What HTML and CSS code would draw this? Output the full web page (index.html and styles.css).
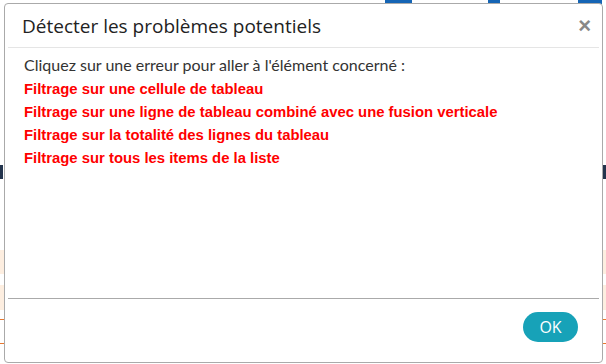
FILE: index.html
```html
<!DOCTYPE html>
<html lang="fr">
<head>
  <meta charset="UTF-8" />
  <title>Détecter les problèmes potentiels</title>
  <link rel="stylesheet" href="styles.css">
</head>
<body>
  <div class="page-behind">
    <span class="bg-tab bg-tab-1"></span>
    <span class="bg-tab bg-tab-2"></span>
    <span class="bg-tab bg-tab-3"></span>
    <span class="bg-band bg-band-1"></span>
    <span class="bg-band bg-band-2"></span>
    <span class="bg-rule bg-rule-1"></span>
    <span class="bg-rule bg-rule-2"></span>
    <span class="bg-mark"></span>
  </div>

  <div class="modal">
    <div class="modal-header">
      <h4 class="modal-title">Détecter les problèmes potentiels</h4>
      <button class="close">&times;</button>
    </div>
    <div class="modal-body">
      <p class="intro">Cliquez sur une erreur pour aller à l'élément concerné :</p>
      <ul class="errors">
        <li><a href="#">Filtrage sur une cellule de tableau</a></li>
        <li><a href="#">Filtrage sur une ligne de tableau combiné avec une fusion verticale</a></li>
        <li><a href="#">Filtrage sur la totalité des lignes du tableau</a></li>
        <li><a href="#">Filtrage sur tous les items de la liste</a></li>
      </ul>
    </div>
    <div class="modal-footer">
      <button class="btn-ok">OK</button>
    </div>
  </div>
</body>
</html>
```

FILE: styles.css
```css
body {
  margin: 0;
  padding: 0;
  width: 606px;
  height: 364px;
  overflow: hidden;
  background: #fff;
  font-family: 'Open Sans', sans-serif;
  color: #333;
  position: relative;
}

/* page visible behind the dialog */
.page-behind span {
  position: absolute;
  display: block;
}

.bg-tab {
  top: 0;
  height: 4px;
  background: #1565b5;
}
.bg-tab-1 { left: 385px; width: 27px; }
.bg-tab-2 { left: 488px; width: 12px; }
.bg-tab-3 { left: 578px; width: 24px; }

.bg-band {
  left: 0;
  width: 606px;
  background: #fdeee0;
}
.bg-band-1 { top: 250px; height: 24px; }
.bg-band-2 { top: 285px; height: 25px; }

.bg-rule {
  left: 0;
  width: 606px;
  height: 1px;
  background: #e8782f;
}
.bg-rule-1 { top: 319px; }
.bg-rule-2 { top: 343px; }

.bg-mark {
  left: 0;
  top: 165px;
  width: 606px;
  height: 14px;
  background: linear-gradient(to right, #23344d 3px, transparent 3px, transparent 603px, #23344d 603px);
}

.modal {
  position: absolute;
  left: 4px;
  top: 3px;
  width: 591px;
  height: 358px;
  background: #fff;
  border: 1px solid #aaa;
  border-radius: 4px;
  padding: 0 3px;
  display: flex;
  flex-direction: column;
}

.modal-header {
  display: flex;
  align-items: center;
  justify-content: space-between;
  height: 43px;
  border-bottom: 1px solid #e5e5e5;
  padding: 0 8px 0 14px;
}

.modal-title {
  margin: 0;
  font-size: 19px;
  font-weight: normal;
  color: #222;
}

.close {
  border: none;
  background: none;
  padding: 0;
  font-size: 22px;
  font-weight: bold;
  color: #888;
  line-height: 1;
  cursor: pointer;
}

.modal-body {
  flex: 1;
  padding: 7px 16px 0;
}

.intro {
  margin: 0 0 3px;
  font-family: 'Lato', sans-serif;
  font-size: 16px;
  color: #333;
}

.errors {
  list-style: none;
  margin: 0;
  padding: 0;
}

.errors li {
  height: 23px;
  line-height: 23px;
}

.errors a {
  font-family: 'Liberation Sans', Arial, sans-serif;
  font-weight: bold;
  font-size: 14.85px;
  color: #f00;
  text-decoration: none;
}

.modal-footer {
  height: 64px;
  border-top: 1px solid #aaa;
  display: flex;
  justify-content: flex-end;
  align-items: flex-start;
  padding: 13px 21px 0 0;
  box-sizing: border-box;
}

.btn-ok {
  width: 55px;
  height: 30px;
  border: none;
  border-radius: 15px;
  background: #17a2b8;
  color: #fff;
  font-family: 'Open Sans', sans-serif;
  font-size: 16px;
  cursor: pointer;
}
```
